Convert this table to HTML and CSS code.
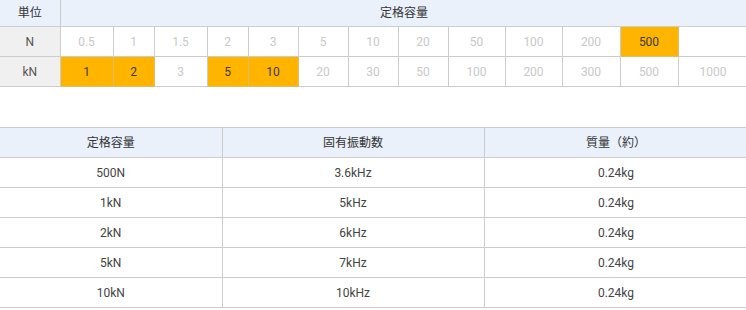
FILE: index.html
```html
<!DOCTYPE html>
<html lang="ja">
<head>
<meta charset="utf-8">
<link rel="stylesheet" href="styles.css">
</head>
<body>
<div class="page">
  <table class="range">
    <colgroup>
      <col class="c-label">
      <col class="c53"><col class="c41"><col class="c53"><col class="c41">
      <col class="c50"><col class="c50"><col class="c50"><col class="c50">
      <col class="c57"><col class="c57"><col class="c58"><col class="c58">
      <col class="c70">
    </colgroup>
    <tr class="head">
      <th>単位</th>
      <th colspan="13">定格容量</th>
    </tr>
    <tr>
      <td class="label">N</td>
      <td>0.5</td><td>1</td><td>1.5</td><td>2</td><td>3</td><td>5</td>
      <td>10</td><td>20</td><td>50</td><td>100</td><td>200</td>
      <td class="on">500</td><td class="blank"></td>
    </tr>
    <tr>
      <td class="label">kN</td>
      <td class="on">1</td><td class="on">2</td><td>3</td><td class="on">5</td><td class="on">10</td>
      <td>20</td><td>30</td><td>50</td><td>100</td><td>200</td><td>300</td><td>500</td><td>1000</td>
    </tr>
  </table>

  <table class="spec">
    <colgroup>
      <col class="s1"><col class="s2"><col class="s3">
    </colgroup>
    <tr class="head">
      <th>定格容量</th><th>固有振動数</th><th>質量（約）</th>
    </tr>
    <tr><td>500N</td><td>3.6kHz</td><td>0.24kg</td></tr>
    <tr><td>1kN</td><td>5kHz</td><td>0.24kg</td></tr>
    <tr><td>2kN</td><td>6kHz</td><td>0.24kg</td></tr>
    <tr><td>5kN</td><td>7kHz</td><td>0.24kg</td></tr>
    <tr><td>10kN</td><td>10kHz</td><td>0.24kg</td></tr>
  </table>
</div>
</body>
</html>
```

FILE: styles.css
```css
html, body {
  margin: 0;
  padding: 0;
  background: #fff;
  overflow: hidden;
}
body {
  font-family: Roboto, "Noto Sans CJK JP", sans-serif;
  font-size: 12px;
  color: #444;
}
.page {
  width: 746px;
  overflow: hidden;
}
table {
  border-collapse: collapse;
  table-layout: fixed;
  width: 748px;
}
th, td {
  padding: 0;
  text-align: center;
  border: 1px solid #cccccc;
  line-height: 16px;
}
th {
  font-weight: normal;
  color: #333;
  background: #eaf1fb;
}
tr > :first-child {
  border-left: none;
}

/* range table */
.range .head th {
  border-top: none;
  height: 26px;
}
.range td {
  height: 29px;
  color: #c9c9c9;
}
.range td.label {
  background: #f0f0f0;
  color: #555;
}
.range td.on {
  background: #ffb400;
  color: #3a3a3a;
  border-color: #dcbc6e;
}
.range td.blank {
  border-right: none;
}
.c-label { width: 60px; }
.c41 { width: 41px; }
.c50 { width: 50px; }
.c53 { width: 53px; }
.c57 { width: 57px; }
.c58 { width: 58px; }
.c70 { width: 70px; }

/* spec table */
.spec {
  margin-top: 40px;
}
.spec th, .spec td {
  height: 29px;
}
.spec td {
  color: #444;
}
.s1 { width: 222px; }
.s2 { width: 262px; }
.s3 { width: 264px; }
```
